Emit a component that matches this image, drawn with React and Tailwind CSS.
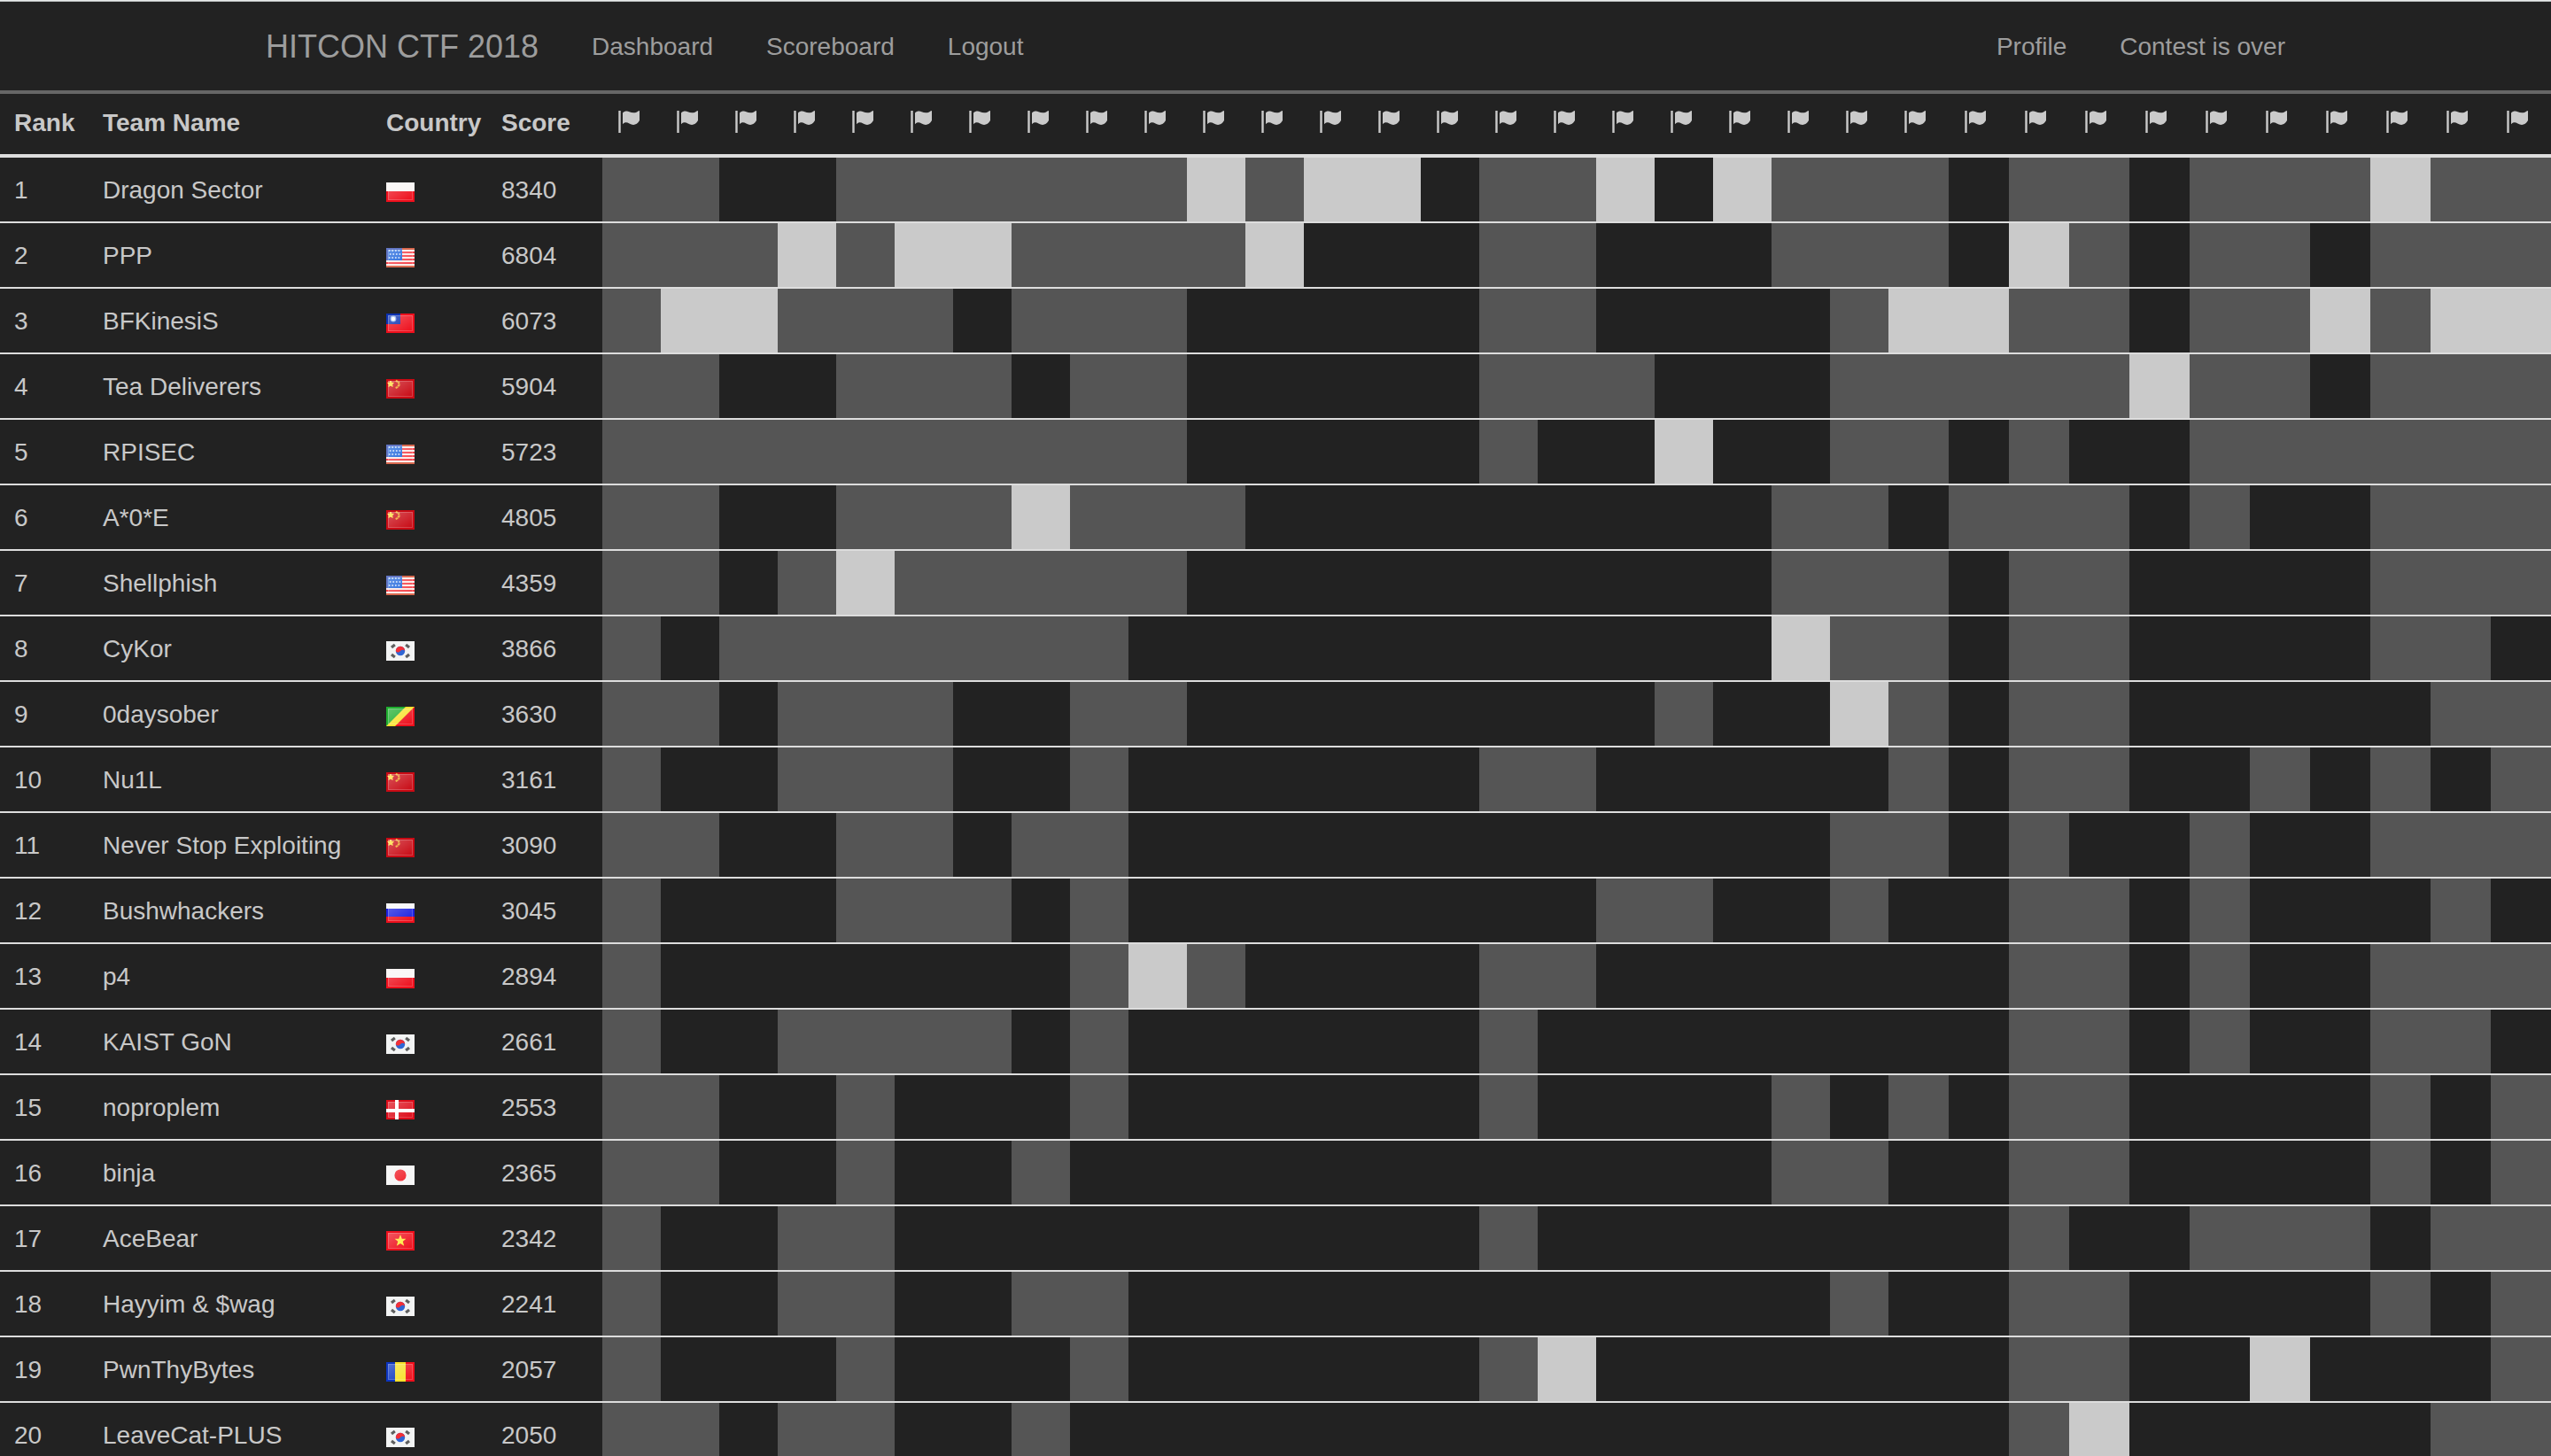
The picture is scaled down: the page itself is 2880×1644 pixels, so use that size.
import React from "react";

/* Task cells per team, run-length coded: s = solved, f = first blood, n = not solved. */
const TEAMS = [
  ["Dragon Sector", "pl", 8340, "s2 n2 s6 f1 s1 f2 n1 s2 f1 n1 f1 s3 n1 s2 n1 s3 f1 s2"],
  ["PPP", "us", 6804, "s3 f1 s1 f2 s4 f1 n3 s2 n3 s3 n1 f1 s1 n1 s2 n1 s3"],
  ["BFKinesiS", "tw", 6073, "s1 f2 s3 n1 s3 n5 s2 n4 s1 f2 s2 n1 s2 f1 s1 f2"],
  ["Tea Deliverers", "cn", 5904, "s2 n2 s3 n1 s2 n5 s3 n3 s5 f1 s2 n1 s3"],
  ["RPISEC", "us", 5723, "s10 n5 s1 n2 f1 n2 s2 n1 s1 n2 s6"],
  ["A*0*E", "cn", 4805, "s2 n2 s3 f1 s3 n9 s2 n1 s3 n1 s1 n2 s3"],
  ["Shellphish", "us", 4359, "s2 n1 s1 f1 s5 n10 s3 n1 s2 n4 s3"],
  ["CyKor", "kr", 3866, "s1 n1 s7 n11 f1 s2 n1 s2 n4 s2 n1"],
  ["0daysober", "cg", 3630, "s2 n1 s3 n2 s2 n8 s1 n2 f1 s1 n1 s2 n5 s2"],
  ["Nu1L", "cn", 3161, "s1 n2 s3 n2 s1 n6 s2 n5 s1 n1 s2 n2 s1 n1 s1 n1 s1"],
  ["Never Stop Exploiting", "cn", 3090, "s2 n2 s2 n1 s2 n12 s2 n1 s1 n2 s1 n2 s3"],
  ["Bushwhackers", "ru", 3045, "s1 n3 s3 n1 s1 n8 s2 n2 s1 n2 s2 n1 s1 n3 s1 n1"],
  ["p4", "pl", 2894, "s1 n7 s1 f1 s1 n4 s2 n7 s2 n1 s1 n2 s3"],
  ["KAIST GoN", "kr", 2661, "s1 n2 s4 n1 s1 n6 s1 n8 s2 n1 s1 n2 s2 n1"],
  ["noproplem", "dk", 2553, "s2 n2 s1 n3 s1 n6 s1 n4 s1 n1 s1 n1 s2 n4 s1 n1 s1"],
  ["binja", "jp", 2365, "s2 n2 s1 n2 s1 n12 s2 n2 s2 n4 s1 n1 s1"],
  ["AceBear", "vn", 2342, "s1 n2 s2 n10 s1 n8 s1 n2 s3 n1 s2"],
  ["Hayyim & $wag", "kr", 2241, "s1 n2 s2 n2 s2 n12 s1 n2 s2 n4 s1 n1 s1"],
  ["PwnThyBytes", "ro", 2057, "s1 n3 s1 n3 s1 n6 s1 f1 n7 s2 n2 f1 n3 s1"],
  ["LeaveCat-PLUS", "kr", 2050, "s2 n1 s2 n2 s1 n16 s1 f1 n5 s2"],
];

const TASKS = Array.from({ length: 33 }, (_, i) => i);

const CELL = { s: "bg-[#555555]", f: "bg-[#cacaca]", n: "" };
const CELL_LABEL = { s: "solved", f: "first blood", n: "unsolved" };

const expand = (runs) =>
  runs.split(" ").flatMap((r) => Array(Number(r.slice(1))).fill(r[0]));

function UsFlag() {
  return (
    <>
      <rect width="16" height="11" fill="#fbe9e6" />
      {[0, 2, 4, 6, 8, 10].map((y) => (
        <rect key={y} y={y} width="16" height="1" fill={y === 0 || y === 10 ? "#d9694f" : "#f5424a"} />
      ))}
      <rect width="9" height="7" fill="#6276c4" />
      <rect x="1" y="1" width="8" height="6" fill="#1f66dc" />
      {[1.5, 3.5, 5.5].map((y, r) =>
        [1.8, 3.6, 5.4, 7.2].map((x) => (
          <circle key={x + "-" + y} cx={x + (r % 2 ? 0.5 : 0)} cy={y} r="0.5" fill="#c9dcfa" />
        ))
      )}
    </>
  );
}

function KrFlag() {
  return (
    <>
      <rect width="16" height="11" fill="#f2f3f3" />
      <circle cx="8" cy="5.5" r="2.6" fill="#2f66d4" />
      <path d="M5.4 5.5a2.6 2.6 0 0 1 5.2 0C10 4.6 8.8 4.7 8 5.5 7.2 6.5 6 6.6 5.4 5.5z" fill="#f22f36" />
      <g stroke="#444" strokeWidth="1.6" strokeOpacity="0.85">
        <path d="M3 3.5 4.9 2" />
        <path d="M11.1 2 13 3.5" />
        <path d="M3 7.5 4.9 9" />
        <path d="M11.1 9 13 7.5" />
      </g>
    </>
  );
}

const FLAGS = {
  pl: ["Poland", <><rect width="16" height="5" fill="#f9f5f4" /><rect y="5" width="16" height="6" fill="#ee0f1c" /></>],
  us: ["United States", <UsFlag />],
  tw: [
    "Taiwan",
    <>
      <rect width="16" height="11" fill="#ee0f1c" />
      <rect width="8" height="6" fill="#0c31b0" />
      <circle cx="4" cy="3" r="1.7" fill="#8fb0ee" />
      <circle cx="4" cy="3" r="1.1" fill="#fff" />
    </>,
  ],
  cn: [
    "China",
    <>
      <rect width="16" height="11" fill="#c80a14" />
      <path d="M2.5 1 3 2.1 4.2 2.2 3.3 3 3.6 4.2 2.5 3.5 1.4 4.2 1.7 3 .8 2.2 2 2.1z" fill="#ffdf3a" stroke="#ffdf3a" strokeWidth=".5" />
      <path d="M5.4.9 7 1.7 7.3 3.3 6.3 4.6 5.2 5" fill="none" stroke="#eea52c" strokeWidth="1.1" strokeDasharray="1.3 .3" />
    </>,
  ],
  kr: ["South Korea", <KrFlag />],
  cg: [
    "Congo",
    <>
      <rect width="16" height="11" fill="#ee0f1c" />
      <path d="M0 11V0H16L5 11z" fill="#f8e330" />
      <path d="M0 11V0H11z" fill="#1fae2f" />
    </>,
  ],
  ru: [
    "Russia",
    <>
      <rect width="16" height="4" fill="#f7f7f9" />
      <rect y="3" width="16" height="5" fill="#1a1fe0" />
      <rect y="7.5" width="16" height="3.5" fill="#ee0f1c" />
    </>,
  ],
  dk: [
    "Denmark",
    <>
      <rect width="16" height="11" fill="#dd0d1a" />
      <rect x="5" width="2" height="11" fill="#fff" />
      <rect y="5" width="16" height="2" fill="#fff" />
    </>,
  ],
  jp: ["Japan", <><rect width="16" height="11" fill="#f5f5f5" /><circle cx="8" cy="5.5" r="3.3" fill="#f01e28" /></>],
  vn: [
    "Vietnam",
    <>
      <rect width="16" height="11" fill="#ee0f1c" />
      <path d="M8 2 8.9 4.4H11.2L9.4 5.9 10.1 8.4 8 7 5.9 8.4 6.6 5.9 4.8 4.4H7.1z" fill="#ffea3a" />
    </>,
  ],
  ro: [
    "Romania",
    <>
      <rect width="5" height="11" fill="#0c35c0" />
      <rect x="5" width="6" height="11" fill="#f7e02a" />
      <rect x="11" width="5" height="11" fill="#ee0f1c" />
    </>,
  ],
};

function CountryFlag({ code }) {
  const [name, art] = FLAGS[code];
  return (
    <svg className="inline-block h-[22px] w-8 align-middle" viewBox="0 0 16 11" role="img" aria-label={name}>
      <defs>
        <linearGradient id="gloss" x1="0" y1="0" x2="1" y2="1">
          <stop offset="0" stopColor="#fff" stopOpacity="0.3" />
          <stop offset="1" stopColor="#fff" stopOpacity="0" />
        </linearGradient>
      </defs>
      {art}
      {code !== "kr" && <rect x="1" y="1" width="14" height="9" fill="url(#gloss)" />}
      <rect x="1.25" y="1.25" width="13.5" height="8.5" fill="none" stroke="#fff" strokeOpacity="0.2" strokeWidth=".5" />
    </svg>
  );
}

function TaskFlag() {
  return (
    <svg className="block size-7" viewBox="0 0 28 28" fill="#cacaca" role="img" aria-label="Task">
      <path d="M2.3 0Q3.5-1 4.7 0V25H2.3z" />
      <path d="M7 2.6C9 .4 12 .2 14.5 1.2 18 3 22 2.6 24.6.4 25.4-.2 26 .2 26 .8V11C23 16 19 17.2 14.5 14.4 11.5 12.8 9 13 7.6 14.8 7.2 15.2 7 15 7 14.6z" />
    </svg>
  );
}

const navLink = "px-[30px] pt-[31px] pb-[29px] hover:text-white";

export default function App() {
  return (
    <div className="min-h-screen bg-[#222222] font-['Liberation_Sans',Arial,sans-serif] text-[28px] leading-10 text-[#c8c8c8]">
      <header className="border-t border-b-4 border-t-[#e8eaea] border-b-[#666666]">
        <div className="border-t border-[#b9bcbc]">
          <nav className="mx-auto flex max-w-[2340px] text-[#9d9d9d]">
            <a href="#home" className="px-[30px] pt-[31px] pb-[29px] text-[36px] hover:text-white">HITCON CTF 2018</a>
            <a href="#dashboard" className={navLink}>Dashboard</a>
            <a href="#scoreboard" className={navLink}>Scoreboard</a>
            <a href="#logout" className={navLink}>Logout</a>
            <a href="#profile" className={"ml-auto " + navLink}>Profile</a>
            <a href="#contest" className={navLink}>Contest is over</a>
          </nav>
        </div>
      </header>
      <table className="w-full table-fixed border-separate border-spacing-0 text-left">
        <colgroup>
          <col className="w-[100px]" />
          <col className="w-[320px]" />
          <col className="w-[130px]" />
          <col className="w-[130px]" />
          {TASKS.map((i) => (
            <col key={i} className={i < 22 ? "w-[66px]" : ""} />
          ))}
        </colgroup>
        <thead>
          <tr className="*:border-b-4 *:border-[#dddddd] *:pt-[13px] *:pb-[15px] *:pl-4">
            <th>Rank</th>
            <th>Team Name</th>
            <th>Country</th>
            <th>Score</th>
            {TASKS.map((i) => (
              <th key={i}><TaskFlag /></th>
            ))}
          </tr>
        </thead>
        <tbody>
          {TEAMS.map(([team, country, score, runs], i) => (
            <tr key={team} className="*:border-b-2 *:border-[#dddddd]">
              <td className="pt-[17px] pb-[15px] pl-4">{i + 1}</td>
              <td className="pt-[17px] pb-[15px] pl-4">{team}</td>
              <td className="pt-[17px] pb-[15px] pl-4"><CountryFlag code={country} /></td>
              <td className="pt-[17px] pb-[15px] pl-4">{score}</td>
              {expand(runs).map((state, j) => (
                <td key={j} className={CELL[state]} aria-label={CELL_LABEL[state]} />
              ))}
            </tr>
          ))}
        </tbody>
      </table>
    </div>
  );
}
